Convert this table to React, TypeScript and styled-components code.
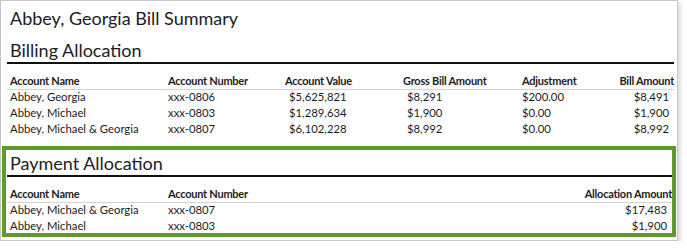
import React from 'react';
import styled, { createGlobalStyle } from 'styled-components';

const GlobalStyle = createGlobalStyle`
  body {
    margin: 0;
    background: #fff;
    font-family: 'Lato', 'Open Sans', sans-serif;
    color: #1c1c24;
  }
`;

const Frame = styled.div`
  width: 678px;
  height: 241px;
  border: 1px solid #c6c6c6;
  box-shadow: 3px 3px 3px rgba(0, 0, 0, 0.12);
  box-sizing: border-box;
  background: #fff;
  padding-top: 6px;
`;

const Title = styled.h1`
  margin: 0 0 0 9px;
  font-size: 18px;
  font-weight: 400;
  line-height: 23px;
`;

const Section = styled.section<{ highlight?: boolean }>`
  margin: ${(p) => (p.highlight ? '8px 1px 0 1px' : '9px 3px 0 6px')};
  border: ${(p) => (p.highlight ? '4px solid #5f9b2b' : 'none')};
  padding: ${(p) => (p.highlight ? '2px 0 0 1px' : '0')};
  height: ${(p) => (p.highlight ? '91px' : 'auto')};
  box-sizing: border-box;
  overflow: hidden;
`;

const SectionTitle = styled.h2`
  margin: 0;
  padding: 0 0 1px 3px;
  font-size: 18px;
  font-weight: 400;
  line-height: 22px;
  border-bottom: 2px solid #111;
`;

const Table = styled.table`
  width: 100%;
  border-collapse: collapse;
  table-layout: fixed;
  margin-top: 10px;
`;

const Th = styled.th<{ w?: number; right?: boolean }>`
  box-sizing: border-box;
  width: ${(p) => (p.w ? `${p.w}px` : 'auto')};
  text-align: ${(p) => (p.right ? 'right' : 'left')};
  font-size: 11px;
  font-weight: 700;
  letter-spacing: -0.25px;
  padding: 0 0 2px 3px;
  line-height: 13px;
  border-bottom: 1px solid #d3d3d3;
  white-space: nowrap;
`;

const Td = styled.td<{ right?: boolean; indent?: number }>`
  text-align: ${(p) => (p.right ? 'right' : 'left')};
  font-size: 11.3px;
  line-height: 14px;
  padding: 0 ${(p) => (p.right ? '5px' : '0')} 2px ${(p) => 3 + (p.indent ?? 0)}px;
  white-space: nowrap;
`;

const billing = [
  ['Abbey, Georgia', 'xxx-0806', '$5,625,821', '$8,291', '$200.00', '$8,491'],
  ['Abbey, Michael', 'xxx-0803', '$1,289,634', '$1,900', '$0.00', '$1,900'],
  ['Abbey, Michael & Georgia', 'xxx-0807', '$6,102,228', '$8,992', '$0.00', '$8,992'],
];

const payments = [
  ['Abbey, Michael & Georgia', 'xxx-0807', '$17,483'],
  ['Abbey, Michael', 'xxx-0803', '$1,900'],
];

export default function App() {
  return (
    <>
      <GlobalStyle />
      <Frame>
        <Title>Abbey, Georgia Bill Summary</Title>
        <Section>
          <SectionTitle>Billing Allocation</SectionTitle>
          <Table>
            <thead>
              <tr>
                <Th w={158}>Account Name</Th>
                <Th w={117}>Account Number</Th>
                <Th w={118}>Account Value</Th>
                <Th w={119}>Gross Bill Amount</Th>
                <Th w={80}>Adjustment</Th>
                <Th right>Bill Amount</Th>
              </tr>
            </thead>
            <tbody>
              {billing.map((r) => (
                <tr key={r[0]}>
                  <Td>{r[0]}</Td>
                  <Td>{r[1]}</Td>
                  <Td indent={4}>{r[2]}</Td>
                  <Td indent={4}>{r[3]}</Td>
                  <Td>{r[4]}</Td>
                  <Td right>{r[5]}</Td>
                </tr>
              ))}
            </tbody>
          </Table>
        </Section>
        <Section highlight>
          <SectionTitle>Payment Allocation</SectionTitle>
          <Table>
            <thead>
              <tr>
                <Th w={158}>Account Name</Th>
                <Th w={117}>Account Number</Th>
                <Th right>Allocation Amount</Th>
              </tr>
            </thead>
            <tbody>
              {payments.map((r) => (
                <tr key={r[0]}>
                  <Td>{r[0]}</Td>
                  <Td>{r[1]}</Td>
                  <Td right>{r[2]}</Td>
                </tr>
              ))}
            </tbody>
          </Table>
        </Section>
      </Frame>
    </>
  );
}
